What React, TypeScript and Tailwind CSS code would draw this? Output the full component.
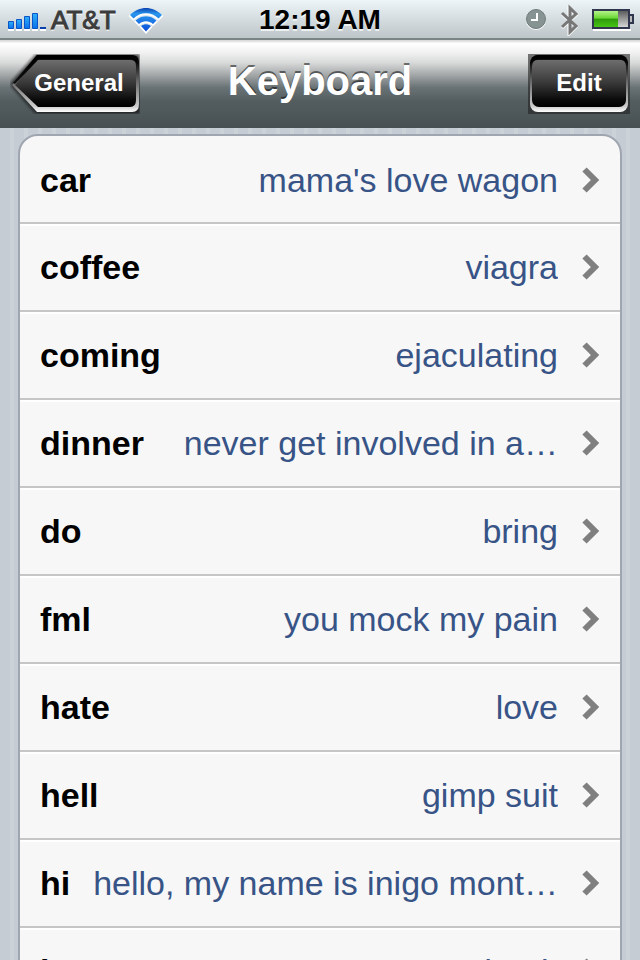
import React from 'react';
import { clsx } from 'clsx';

interface Shortcut {
  shortcut: string;
  phrase: string;
}

const shortcuts: Shortcut[] = [
  { shortcut: 'car', phrase: "mama's love wagon" },
  { shortcut: 'coffee', phrase: 'viagra' },
  { shortcut: 'coming', phrase: 'ejaculating' },
  { shortcut: 'dinner', phrase: 'never get involved in a…' },
  { shortcut: 'do', phrase: 'bring' },
  { shortcut: 'fml', phrase: 'you mock my pain' },
  { shortcut: 'hate', phrase: 'love' },
  { shortcut: 'hell', phrase: 'gimp suit' },
  { shortcut: 'hi', phrase: 'hello, my name is inigo mont…' },
  { shortcut: 'home', phrase: 'drunk' },
];

const SignalIcon: React.FC = () => (
  <svg className="h-6 w-10" viewBox="0 0 40 24" aria-hidden="true">
    <defs>
      <linearGradient id="signal" x1="0" y1="0" x2="0" y2="1">
        <stop offset="0" stopColor="#2fb0fa" />
        <stop offset="1" stopColor="#0a70ea" />
      </linearGradient>
    </defs>
    <path d="M1 22h6M9 22h6M17 22h6M25 22h6M33 22h6" stroke="#fff" strokeWidth="2" />
    <g fill="url(#signal)" stroke="#0b54c8">
      <path d="M1.500 13.500h5v7h-5z" />
      <path d="M9.500 11.500h5v9h-5z" />
      <path d="M17.500 8.500h5v12h-5z" />
      <path d="M25.500 5.500h5v15h-5z" />
    </g>
    <path d="M33 19h6v2h-6z" fill="#0b40b0" />
  </svg>
);

const WifiIcon: React.FC = () => (
  <svg className="h-7 w-9" viewBox="0 0 36 28" aria-hidden="true">
    <defs>
      <linearGradient id="wifi" x1="0" y1="0" x2="0" y2="1">
        <stop offset="0" stopColor="#0c44b0" />
        <stop offset="0.25" stopColor="#2a96ee" />
        <stop offset="1" stopColor="#0a4cd8" />
      </linearGradient>
      <path
        id="wifi-arcs"
        d="M2 9C11 -.3 25 -.3 34 9L30.500 12.500C23.500 5.500 12.500 5.500 5.500 12.500zM7.500 14.500C13.500 8.800 22.500 8.800 28.500 14.500L25 18C21 14.300 15 14.300 11 18zM13 20C16 17.500 20 17.500 23 20L18 25.500z"
      />
    </defs>
    <use href="#wifi-arcs" y="1" fill="#fff" stroke="#fff" strokeWidth="2" />
    <use href="#wifi-arcs" fill="url(#wifi)" />
  </svg>
);

const ClockIcon: React.FC = () => (
  <svg className="size-6" viewBox="0 0 24 24" aria-hidden="true">
    <circle cx="12" cy="12" r="10" fill="#fff" />
    <circle cx="12" cy="11" r="9.500" fill="#879292" stroke="#6e7979" />
    <path d="M13 5v7H7" fill="none" stroke="#fff" strokeWidth="2" />
  </svg>
);

const BluetoothIcon: React.FC = () => (
  <svg className="h-8 w-5" viewBox="0 0 20 32" fill="none" aria-hidden="true">
    <path d="M2 10l14 13-7 7V5l7 6L2 24" stroke="#fff" strokeWidth="3" />
    <path d="M2 9l14 13-6 6V4l6 6L2 23" stroke="#777" strokeWidth="3" />
  </svg>
);

const BatteryIcon: React.FC = () => (
  <svg className="h-6 w-11" viewBox="0 0 44 24" aria-hidden="true">
    <defs>
      <linearGradient id="charge" x1="0" y1="0" x2="0" y2="1">
        <stop offset="0" stopColor="#b4f28a" />
        <stop offset="0.45" stopColor="#6ad832" />
        <stop offset="0.5" stopColor="#2f9a0c" />
        <stop offset="1" stopColor="#46c414" />
      </linearGradient>
      <linearGradient id="drained" x1="0" y1="0" x2="0" y2="1">
        <stop offset="0" stopColor="#555" />
        <stop offset="1" stopColor="#ddd" />
      </linearGradient>
    </defs>
    <path d="M1 22h38" stroke="#fff" strokeWidth="2" />
    <path d="M1 2h36v18H1z" fill="url(#drained)" stroke="#30364e" strokeWidth="2" />
    <path d="M2 3h24v16H2z" fill="url(#charge)" />
    <path d="M38 7h3v8h-3" fill="#bbb" stroke="#30364e" strokeWidth="2" />
  </svg>
);

const StatusBar: React.FC = () => (
  <header className="grid h-10 grid-cols-[1fr_auto_1fr] items-center border-b-2 border-[#7b8485] bg-linear-to-b from-[#edf5f9] to-[#bec5c8] [text-shadow:0_2px_0_rgba(255,255,255,0.7)]">
    <div className="flex items-center pl-[7px]">
      <SignalIcon />
      <span className="ml-1 text-[26px] leading-10 text-[#3c3c3c] [-webkit-text-stroke:1px_#3c3c3c]">AT&amp;T</span>
      <span className="ml-3">
        <WifiIcon />
      </span>
    </div>
    <time className="text-[28px] leading-10 font-bold text-black">12:19 AM</time>
    <div className="flex items-center justify-end gap-3 pr-1">
      <ClockIcon />
      <BluetoothIcon />
      <BatteryIcon />
    </div>
  </header>
);

const NavBar: React.FC = () => (
  <nav className="grid h-[88px] grid-cols-[1fr_auto_1fr] items-start bg-[linear-gradient(#d4d4d4_0%,#fff_4%,#f2f2f2_14%,#d8d9d9_26%,#a2a6a7_40%,#697275_54%,#535d60_70%,#485053_100%)] px-[10px] pt-[14px] text-white [text-shadow:0_-2px_0_rgba(0,0,0,0.5)]">
    <button type="button" className="relative h-[60px] w-[130px] pb-[2px] pl-2 text-center text-2xl font-bold">
      <svg className="absolute inset-0 size-full" viewBox="0 0 130 60" aria-hidden="true">
        <defs>
          <linearGradient id="key" x1="0" y1="0" x2="0" y2="1">
            <stop offset="0" stopColor="#707070" />
            <stop offset="0.5" stopColor="#383838" />
            <stop offset="0.85" stopColor="#0a0a0a" />
            <stop offset="1" stopColor="#000" />
          </linearGradient>
          <linearGradient id="rim" x1="0" y1="0" x2="0" y2="1">
            <stop offset="0" stopColor="#000" />
            <stop offset="0.15" stopColor="#111" />
            <stop offset="0.45" stopColor="#666" />
            <stop offset="0.9" stopColor="#ccc" />
            <stop offset="1" stopColor="#fff" />
          </linearGradient>
          <filter id="soft">
            <feGaussianBlur stdDeviation="1.500" />
          </filter>
        </defs>
        <path d="M26 0h104v60H26L1 32v-4z" fill="#111" opacity="0.7" filter="url(#soft)" />
        <path d="M27 1h95q7 0 7 7v42q0 8-7 8H27L2 31z" fill="url(#rim)" />
        <path d="M28 5h91q7 0 7 7v34q0 7-6 7H28L5 31z" fill="url(#key)" />
        <path d="M27 1h94q6 0 7 10-2-5-8-5H28L5 30l-2-1z" fill="#000" opacity="0.85" />
      </svg>
      <span className="relative">General</span>
    </button>
    <h1 className="text-[40px] leading-[54px] font-bold">Keyboard</h1>
    <button type="button" className="relative h-[60px] w-[102px] justify-self-end pb-[2px] text-center text-2xl font-bold">
      <svg className="absolute inset-0 size-full" viewBox="0 0 102 60" aria-hidden="true">
        <path d="M0 0h102v60H0z" fill="#222" opacity="0.6" />
        <rect x="2" y="1" width="98" height="57" rx="8" fill="url(#rim)" />
        <rect x="4" y="5" width="94" height="48" rx="7" fill="url(#key)" />
        <path d="M2 11q1-10 8-10h82q7 0 8 10-2-5-8-5H10q-6 0-8 5z" fill="#000" opacity="0.85" />
      </svg>
      <span className="relative">Edit</span>
    </button>
  </nav>
);

const Chevron: React.FC = () => (
  <svg className="h-[26px] w-[18px] shrink-0" viewBox="0 0 18 26" fill="none" aria-hidden="true">
    <path d="M2.500 2.500L13 13 2.500 23.500" stroke="#7f7f7f" strokeWidth="6" />
  </svg>
);

interface ShortcutRowProps extends Shortcut {
  first: boolean;
}

const ShortcutRow: React.FC<ShortcutRowProps> = ({ shortcut, phrase, first }) => (
  <li className={clsx('border-b-2 border-b-[#c6c6c6]', first ? 'rounded-t-[18px]' : 'border-t-2 border-t-white')}>
    <a href="#" className={clsx('flex items-center px-5', first ? 'h-[86px] pt-[2px]' : 'h-[84px] pb-[2px]')}>
      <span className="shrink-0 text-[34px] leading-10 font-bold text-black">{shortcut}</span>
      <span className="ml-5 min-w-0 flex-1 truncate text-right text-[34px] leading-10 text-[#385487]">{phrase}</span>
      <span className="ml-6">
        <Chevron />
      </span>
    </a>
  </li>
);

export default function App() {
  return (
    <div className="flex h-screen flex-col overflow-hidden font-['Liberation_Sans',Arial,sans-serif]">
      <StatusBar />
      <NavBar />
      <main className="min-h-0 flex-1 overflow-hidden bg-[repeating-linear-gradient(90deg,#c5ccd4_0px,#c5ccd4_10px,#cbd2d8_10px,#cbd2d8_14px)] px-[18px] pt-[6px]">
        <ul className="rounded-t-[20px] border-2 border-[#a0a6b0] bg-[#f7f7f7]">
          {shortcuts.map((item, index) => (
            <ShortcutRow key={item.shortcut} {...item} first={index === 0} />
          ))}
        </ul>
      </main>
    </div>
  );
}
